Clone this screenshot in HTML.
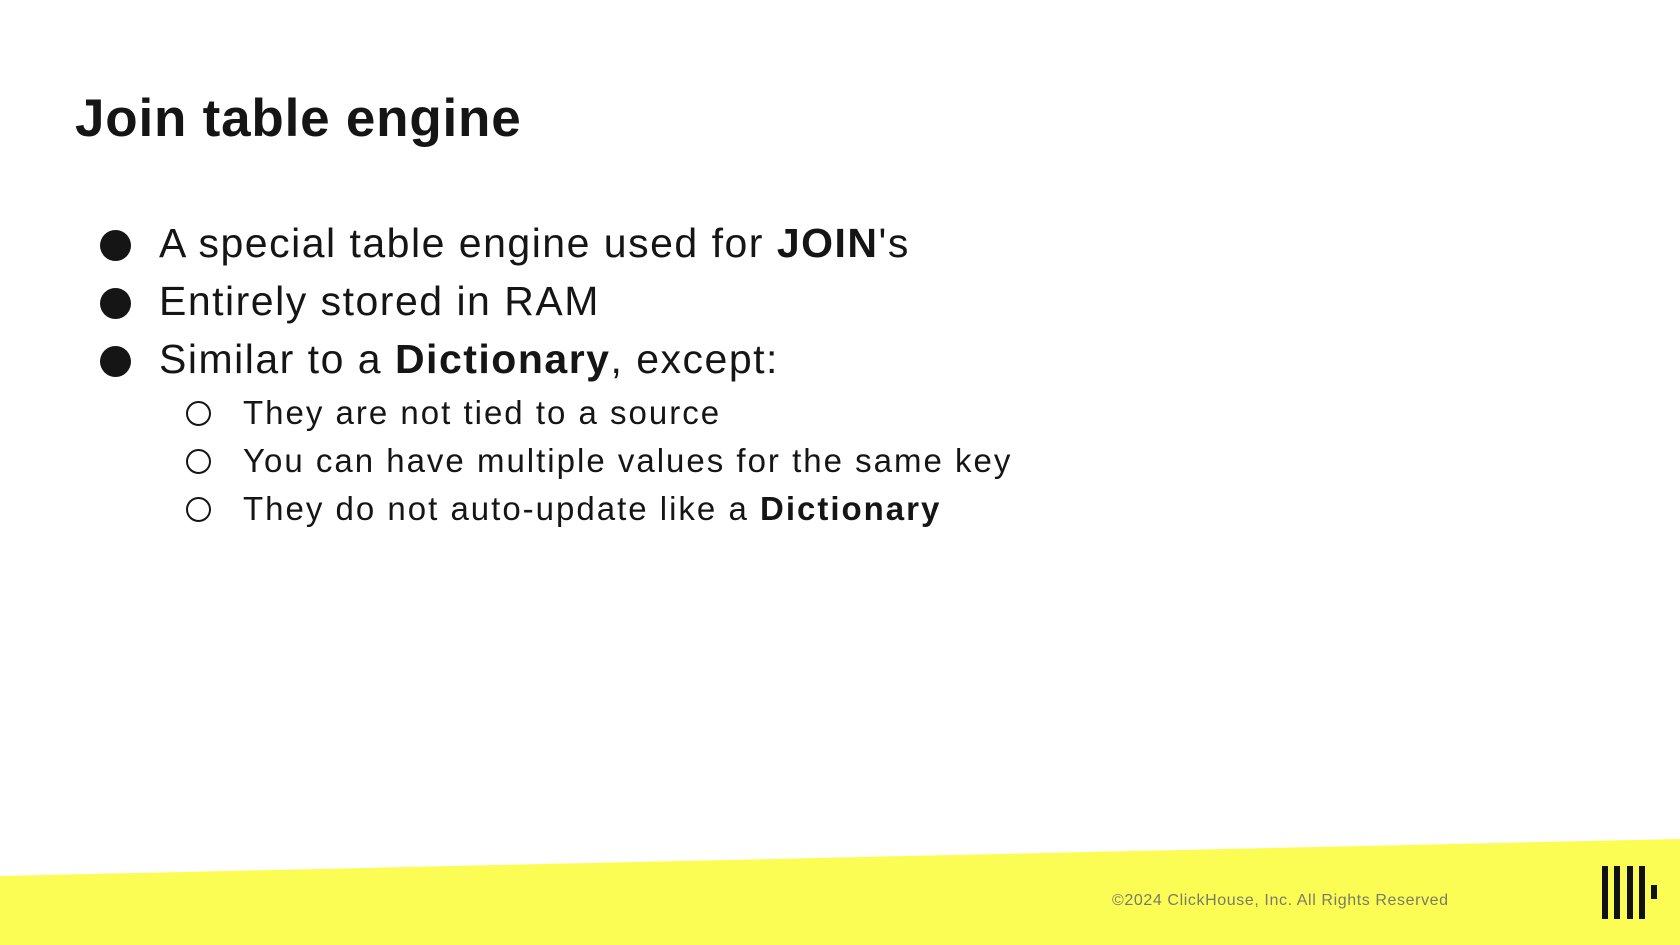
<!DOCTYPE html>
<html><head><meta charset="utf-8"><style>
html,body{margin:0;padding:0}
body{width:1680px;height:945px;position:relative;overflow:hidden;background:#fff;font-family:"Liberation Sans",sans-serif;color:#151515}
h1{position:absolute;left:75px;top:88px;margin:0;font-size:53px;font-weight:bold;letter-spacing:0.8px}
.l{position:absolute;left:159px;font-size:41px;white-space:nowrap;line-height:1;letter-spacing:1.5px}
.l::before{content:"";position:absolute;left:-59px;top:7px;width:31px;height:31px;border-radius:50%;background:#151515}
.s{position:absolute;left:243px;font-size:33px;white-space:nowrap;line-height:1;letter-spacing:2px}
.s::before{content:"";position:absolute;left:-57px;top:5px;width:21px;height:21px;border-radius:50%;border:2.5px solid #151515}
.foot{position:absolute;left:1112px;top:892px;font-size:16px;color:#7a7a6a;letter-spacing:0.6px}
.bar{position:absolute;background:#111;top:866px;height:53px;width:6px}
</style></head><body>
<h1>Join table engine</h1>
<div class="l" style="top:223px">A special table engine used for <b>JOIN</b>'s</div>
<div class="l" style="top:281px">Entirely stored in RAM</div>
<div class="l" style="top:339px">Similar to a <b>Dictionary</b>, except:</div>
<div class="s" style="top:396px">They are not tied to a source</div>
<div class="s" style="top:444px">You can have multiple values for the same key</div>
<div class="s" style="top:492px">They do not auto-update like a <b>Dictionary</b></div>
<svg style="position:absolute;left:0;top:0" width="1680" height="945"><polygon points="0,876 1680,839 1680,945 0,945" fill="#fbfd54"/></svg>
<div class="foot">©2024 ClickHouse, Inc. All Rights Reserved</div>
<div class="bar" style="left:1602px"></div>
<div class="bar" style="left:1614px"></div>
<div class="bar" style="left:1627px"></div>
<div class="bar" style="left:1639px"></div>
<div class="bar" style="left:1651px;top:885px;height:14px"></div>
</body></html>
